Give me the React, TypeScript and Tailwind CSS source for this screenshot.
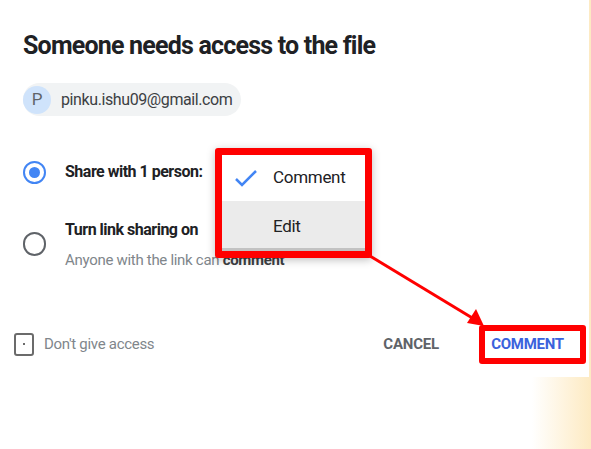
import React from 'react';

/**
 * Access request dialog with annotated menu and arrow
 */
const font = { fontFamily: 'Roboto, "Liberation Sans", sans-serif' };

const App: React.FC = () => {
  return (
    <div
      className="relative w-[591px] h-[449px] overflow-hidden bg-[linear-gradient(to_right,#ffffff_0%,#ffffff_90%,#fdeac2_100%)]"
      style={font}
    >
      {/* Dialog */}
      <div className="relative w-[589px] h-[377px] bg-white">
        <div className="pl-[23px] pt-[31px]">
          <h1 className="text-[25px] leading-[30px] font-bold text-[#202124] tracking-[-0.8px]">
            Someone needs access to the file
          </h1>

          {/* Chip */}
          <div className="mt-[22px] inline-flex items-center h-[33px] rounded-full bg-[#f1f3f4] pr-[9px]">
            <div className="w-[28px] h-[28px] rounded-full bg-[#cfe3fb] flex items-center justify-center text-[17px] text-[#5f6368]">
              P
            </div>
            <span className="ml-[10px] text-[16px] text-[#3c4043] tracking-[-0.4px]">pinku.ishu09@gmail.com</span>
          </div>

          {/* Radios */}
          <div className="mt-[44px] flex items-center h-[24px]">
            <div className="w-[23px] h-[23px] rounded-full border-2 border-[#4285f4] flex items-center justify-center">
              <div className="w-[11px] h-[11px] rounded-full bg-[#4285f4]" />
            </div>
            <span className="ml-[19px] text-[16px] font-bold text-[#202124] tracking-[-0.5px]">Share with 1 person:</span>
          </div>

          <div className="mt-[36px] flex">
            <div className="mt-[12px] w-[23px] h-[24px] rounded-full border-2 border-[#5f6368]" />
            <div className="ml-[19px] flex flex-col">
              <span className="text-[16px] leading-[20px] font-bold text-[#202124] tracking-[-0.5px]">Turn link sharing on</span>
              <span className="mt-[10px] text-[15px] leading-[20px] text-[#80868b] tracking-[-0.3px]">
                Anyone with the link can <b className="text-[#3c4043]">comment</b>
              </span>
            </div>
          </div>
        </div>

        {/* Footer */}
        <div className="absolute left-0 right-0 top-[322px] flex items-center h-[44px]">
          <div className="ml-[14px] w-[20px] h-[23px] rounded-[3px] border-2 border-[#6b6b6b] flex items-center justify-center">
            <div className="w-[2px] h-[2px] bg-[#6b6b6b]" />
          </div>
          <span className="ml-[10px] text-[15px] text-[#80868b] tracking-[-0.3px]">Don't give access</span>
          <span className="ml-auto mr-[40px] text-[15px] font-bold text-[#5f6368] tracking-[-0.2px]">CANCEL</span>
          <div className="mr-[3px] w-[107px] h-[39px] border-[6px] border-[#ff0000] rounded-[3px] flex items-center justify-center">
            <span className="text-[15px] font-bold text-[#3b62dc] tracking-[-0.3px] -ml-[10px]">COMMENT</span>
          </div>
        </div>
      </div>

      {/* Dropdown menu with red frame */}
      <div className="absolute left-[215px] top-[148px] w-[157px] h-[110px] border-[7px] border-[#ff0000] rounded-[3px] bg-white shadow-[0_2px_8px_rgba(0,0,0,0.25)] overflow-hidden">
        <div className="flex items-center h-[46px]">
          <svg className="ml-[12px]" width="24" height="20" viewBox="0 0 24 20">
            <path d="M2 11 L8 17 L22 3" fill="none" stroke="#4285f4" strokeWidth="2.5" />
          </svg>
          <span className="ml-[15px] text-[17px] text-[#202124] tracking-[-0.3px]">Comment</span>
        </div>
        <div className="flex items-center h-[47px] pt-[4px] bg-[#ebebeb]">
          <span className="ml-[51px] text-[17px] text-[#202124] tracking-[-0.3px]">Edit</span>
        </div>
        <div className="h-[3px] bg-[#c2c2c2]" />
      </div>

      {/* Annotation arrow */}
      <svg className="absolute left-0 top-0 pointer-events-none" width="591" height="449">
        <line x1="370" y1="256" x2="474" y2="319" stroke="#ff0000" strokeWidth="3" />
        <polygon points="484,326 467,323 476,309" fill="#ff0000" />
      </svg>
    </div>
  );
};

export default App;
